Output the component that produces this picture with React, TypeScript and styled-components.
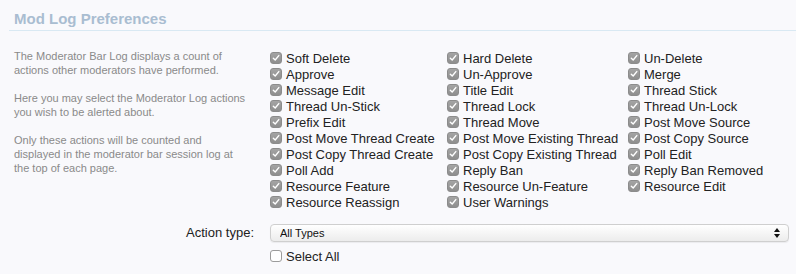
import styled, { createGlobalStyle } from 'styled-components'

const GlobalStyle = createGlobalStyle`
  html, body {
    margin: 0;
    padding: 0;
    background: #f9f9fc;
  }
  body {
    font-family: "Liberation Sans", Arial, sans-serif;
    color: #222;
  }
`

const Page = styled.div`
  width: 796px;
  height: 274px;
  padding: 0 0 0 9px;
  box-sizing: border-box;
  overflow: hidden;
`

const Heading = styled.h3`
  margin: 0;
  padding: 11px 5px 3px;
  font-size: 15px;
  line-height: 16px;
  font-weight: bold;
  color: #a9bdd1;
  border-bottom: 1px solid #d9e9f3;
`

const FormRow = styled.div<{ $top?: number }>`
  display: grid;
  grid-template-columns: 247px 1fr;
  column-gap: 9px;
  padding-left: 5px;
  margin-top: ${({ $top }) => $top ?? 0}px;
`

const Explain = styled.div`
  font-size: 11px;
  line-height: 14px;
  color: #8a8a8a;
  margin-top: -1px;

  p {
    margin: 0 0 14px;
  }
`

const Label = styled.label`
  font-size: 13px;
  line-height: 18px;
  color: #222;
  text-align: right;
  padding-right: 7px;
`

const CheckGrid = styled.ul`
  list-style: none;
  margin: 0;
  padding: 0;
  display: grid;
  grid-template-columns: 177px 181px 1fr;
`

const CheckItem = styled.li`
  display: flex;
  align-items: center;
  gap: 4px;
  height: 16px;
  font-size: 13px;
  color: #222;
  white-space: nowrap;
`

const Box = styled.span<{ $checked?: boolean }>`
  width: 12px;
  height: 12px;
  box-sizing: border-box;
  border-radius: 3px;
  display: inline-flex;
  align-items: center;
  justify-content: center;
  flex: none;
  background: ${({ $checked }) =>
    $checked ? 'linear-gradient(#a4a4a4, #8e8e8e)' : '#fff'};
  border: 1px solid ${({ $checked }) => ($checked ? '#8c8c8c' : '#9c9c9c')};
`

const Controls = styled.div`
  display: flex;
  flex-direction: column;
  gap: 6px;
`

const SelectWrap = styled.div`
  position: relative;
  width: 519px;
`

const Select = styled.select`
  appearance: none;
  -webkit-appearance: none;
  display: block;
  width: 100%;
  height: 18px;
  margin: 0;
  box-sizing: border-box;
  border: 1px solid #cfcfcf;
  border-radius: 4px;
  background: linear-gradient(#ffffff, #ececec);
  font-family: "Liberation Sans", Arial, sans-serif;
  font-size: 11px;
  color: #111;
  padding: 0 0 0 9px;
  box-shadow: 0 1px 1px rgba(0, 0, 0, 0.06);
`

const Arrows = styled.svg`
  position: absolute;
  right: 9px;
  top: 4px;
  pointer-events: none;
`

const Check = ({ checked }: { checked?: boolean }) => (
  <Box $checked={checked}>
    {checked && (
      <svg width="8" height="8" viewBox="0 0 8 8">
        <path
          d="M1.3 4.2 L3.2 6 L6.8 1.6"
          fill="none"
          stroke="#fff"
          strokeWidth="1.4"
          strokeLinecap="round"
          strokeLinejoin="round"
        />
      </svg>
    )}
  </Box>
)

const actions = [
  'Soft Delete',
  'Hard Delete',
  'Un-Delete',
  'Approve',
  'Un-Approve',
  'Merge',
  'Message Edit',
  'Title Edit',
  'Thread Stick',
  'Thread Un-Stick',
  'Thread Lock',
  'Thread Un-Lock',
  'Prefix Edit',
  'Thread Move',
  'Post Move Source',
  'Post Move Thread Create',
  'Post Move Existing Thread',
  'Post Copy Source',
  'Post Copy Thread Create',
  'Post Copy Existing Thread',
  'Poll Edit',
  'Poll Add',
  'Reply Ban',
  'Reply Ban Removed',
  'Resource Feature',
  'Resource Un-Feature',
  'Resource Edit',
  'Resource Reassign',
  'User Warnings',
]

export default function App() {
  return (
    <>
      <GlobalStyle />
      <Page>
        <Heading>Mod Log Preferences</Heading>

        <FormRow $top={19}>
          <Explain>
            <p>
              The Moderator Bar Log displays a count of
              <br />
              actions other moderators have performed.
            </p>
            <p>
              Here you may select the Moderator Log actions
              <br />
              you wish to be alerted about.
            </p>
            <p>
              Only these actions will be counted and
              <br />
              displayed in the moderator bar session log at
              <br />
              the top of each page.
            </p>
          </Explain>
          <CheckGrid>
            {actions.map((action) => (
              <CheckItem key={action}>
                <Check checked />
                {action}
              </CheckItem>
            ))}
          </CheckGrid>
        </FormRow>

        <FormRow $top={14}>
          <Label>Action type:</Label>
          <Controls>
            <SelectWrap>
              <Select defaultValue="all">
                <option value="all">All Types</option>
              </Select>
              <Arrows width="6" height="10" viewBox="0 0 6 10">
                <path d="M3 0 L6 4 L0 4 Z M0 6 L6 6 L3 10 Z" fill="#111" />
              </Arrows>
            </SelectWrap>
            <CheckItem>
              <Check />
              Select All
            </CheckItem>
          </Controls>
        </FormRow>
      </Page>
    </>
  )
}
